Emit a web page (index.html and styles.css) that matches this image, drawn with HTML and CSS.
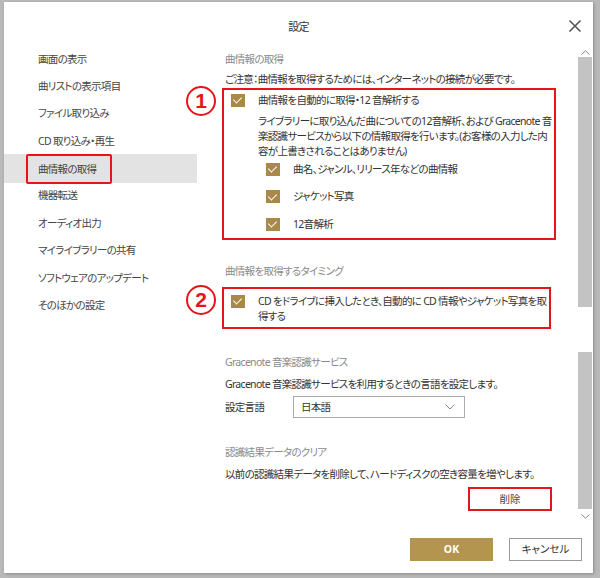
FILE: index.html
```html
<!DOCTYPE html>
<html lang="ja">
<head>
<meta charset="utf-8">
<title>設定</title>
<link rel="stylesheet" href="styles.css">
</head>
<body>
<div class="window">
  <header class="titlebar">
    <span></span>
    <h1 class="title">設定</h1>
    <button class="close" aria-label="閉じる">
      <svg width="14" height="14" viewBox="0 0 14 14"><path d="M1.5 1.5 L12.5 12.5 M12.5 1.5 L1.5 12.5" stroke="#555" stroke-width="1.6" fill="none"/></svg>
    </button>
  </header>
  <div class="main">
    <nav class="sidebar">
      <div class="nav-item">画面の表示</div>
      <div class="nav-item">曲リストの表示項目</div>
      <div class="nav-item">ファイル取り込み</div>
      <div class="nav-item">CD 取り込み・再生</div>
      <div class="nav-item active"><span class="mark">曲情報の取得</span></div>
      <div class="nav-item">機器転送</div>
      <div class="nav-item">オーディオ出力</div>
      <div class="nav-item">マイライブラリーの共有</div>
      <div class="nav-item">ソフトウェアのアップデート</div>
      <div class="nav-item">そのほかの設定</div>
    </nav>
    <section class="content">
      <h2 class="sec sec-1">曲情報の取得</h2>
      <p class="note">ご注意：曲情報を取得するためには、インターネットの接続が必要です。</p>
      <div class="redbox box-1">
        <span class="badge">1</span>
        <div class="check-row">
          <span class="cb"></span>
          <span>曲情報を自動的に取得・12 音解析する</span>
        </div>
        <p class="desc">ライブラリーに取り込んだ曲についての12音解析、および Gracenote 音<br>楽認識サービスから以下の情報取得を行います。(お客様の入力した内<br>容が上書きされることはありません)</p>
        <div class="sub-list">
          <div class="check-row"><span class="cb"></span><span>曲名、ジャンル、リリース年などの曲情報</span></div>
          <div class="check-row"><span class="cb"></span><span>ジャケット写真</span></div>
          <div class="check-row"><span class="cb"></span><span>12音解析</span></div>
        </div>
      </div>
      <h2 class="sec sec-2">曲情報を取得するタイミング</h2>
      <div class="redbox box-2">
        <span class="badge">2</span>
        <div class="check-row top">
          <span class="cb"></span>
          <span class="wrap">CD をドライブに挿入したとき、自動的に CD 情報やジャケット写真を取<br>得する</span>
        </div>
      </div>
      <h2 class="sec sec-3">Gracenote 音楽認識サービス</h2>
      <p class="line gap7">Gracenote 音楽認識サービスを利用するときの言語を設定します。</p>
      <div class="lang-row">
        <span class="lang-label">設定言語</span>
        <div class="select">
          <span>日本語</span>
          <svg width="10" height="6" viewBox="0 0 10 6"><path d="M0.5 0.5 L5 5 L9.5 0.5" stroke="#888" stroke-width="1" fill="none"/></svg>
        </div>
      </div>
      <h2 class="sec sec-4">認識結果データのクリア</h2>
      <p class="line gap7">以前の認識結果データを削除して、ハードディスクの空き容量を増やします。</p>
      <div class="del-row">
        <button class="del">削除</button>
      </div>
    </section>
    <div class="scrollbar">
      <svg class="arrow" width="9" height="5" viewBox="0 0 9 5"><path d="M0.5 4.5 L4.5 0.8 L8.5 4.5" stroke="#888" stroke-width="1" fill="none"/></svg>
      <div class="thumb t1"></div>
      <div class="gap"></div>
      <div class="thumb t2"></div>
      <svg class="arrow" width="9" height="5" viewBox="0 0 9 5"><path d="M0.5 0.5 L4.5 4.2 L8.5 0.5" stroke="#888" stroke-width="1" fill="none"/></svg>
    </div>
  </div>
  <footer class="footer">
    <button class="btn ok">OK</button>
    <button class="btn cancel">キャンセル</button>
  </footer>
</div>
</body>
</html>
```
FILE: styles.css
```css
* { box-sizing: border-box; }
html, body { margin: 0; padding: 0; }
body {
  width: 600px;
  height: 578px;
  background: #b9b9b9;
  font-family: "Noto Sans", "Noto Sans CJK JP", sans-serif;
  font-size: 10.5px;
  letter-spacing: -0.7px;
  line-height: 15px;
  color: #333;
  font-feature-settings: "palt";
  overflow: hidden;
}
.window {
  position: relative;
  margin: 2px 0 0 4px;
  width: 589px;
  height: 571px;
  background: #fff;
  display: flex;
  flex-direction: column;
  box-shadow: 1px 1px 3px rgba(0,0,0,0.25);
}
.titlebar {
  height: 43px;
  display: grid;
  grid-template-columns: 1fr auto 1fr;
  align-items: start;
  padding-top: 17px;
}
.title {
  margin: 0;
  font-size: 11px;
  font-weight: normal;
  line-height: 15px;
  color: #333;
}
.close {
  justify-self: end;
  margin: 0 11px 0 0;
  padding: 0;
  border: 0;
  background: none;
  width: 14px;
  height: 14px;
  display: flex;
}
.main {
  display: flex;
  height: 483px;
}
.sidebar {
  width: 193px;
  flex: none;
  padding-top: 0.5px;
}
.nav-item {
  height: 27.4px;
  line-height: 27.4px;
  padding-left: 34px;
  color: #444;
}
.nav-item.active {
  background: #e3e3e3;
  height: 29px;
  line-height: 29px;
  margin: -0.8px 0;
}
.mark {
  position: relative;
  display: inline-block;
  line-height: 15px;
  vertical-align: middle;
}
.mark::after {
  content: "";
  position: absolute;
  left: -12px;
  right: -16px;
  top: -7.5px;
  bottom: -7.5px;
  border: 2.5px solid #e4161b;
  border-radius: 2px;
}
.content {
  flex: 1;
  padding-left: 28px;
  padding-top: 6.5px;
}
.sec {
  margin: 0;
  font-size: 10.5px;
  font-weight: normal;
  line-height: 15px;
  color: #8a8a8a;
}
.note { margin: 5px 0 0; }
.redbox {
  position: relative;
  border: 2px solid #e4161b;
  margin-left: -3px;
}
.box-1 {
  width: 334px;
  margin-top: 1.5px;
  padding: 2.5px 0 6.5px 7px;
}
.box-2 {
  width: 329px;
  margin-top: 8.5px;
  padding: 4.5px 0 3.5px 7px;
}
.badge {
  position: absolute;
  left: -38px;
  top: -4px;
  width: 30px;
  height: 30px;
  border: 2px solid #e4161b;
  border-radius: 50%;
  color: #e4161b;
  font-family: "Liberation Sans", sans-serif;
  font-weight: bold;
  font-size: 21px;
  letter-spacing: 0;
  line-height: 26px;
  text-align: center;
  background: #fff;
}
.check-row {
  display: flex;
  align-items: center;
  gap: 13px;
}
.check-row.top { align-items: flex-start; }
.check-row.top .cb { margin-top: 1px; }
.cb {
  flex: none;
  width: 14px;
  height: 13px;
  background: #a8894a;
  position: relative;
}
.cb::after {
  content: "";
  position: absolute;
  left: 4px;
  top: 1.5px;
  width: 4px;
  height: 7px;
  border: solid #fff;
  border-width: 0 1.6px 1.6px 0;
  transform: rotate(45deg);
}
.wrap { white-space: nowrap; }
.desc {
  margin: 6px 0 0 27px;
  white-space: nowrap;
}
.sub-list {
  margin: 3px 0 0 35px;
  display: flex;
  flex-direction: column;
  gap: 12.5px;
}
.sec-2 { margin-top: 23.5px; }
.sec-3 { margin-top: 25.5px; }
.sec-4 { margin-top: 26.5px; }
.line { margin: 0; }
.gap7 { margin-top: 7px; }
.lang-row {
  margin-top: 4.5px;
  display: flex;
  align-items: center;
}
.lang-label {
  width: 68px;
  padding-top: 1px;
}
.select {
  width: 172px;
  height: 22px;
  border: 1px solid #ababab;
  display: flex;
  align-items: center;
  justify-content: space-between;
  padding: 0 9px 0 7px;
}
.del-row {
  display: flex;
  justify-content: flex-end;
  width: 327px;
  margin-top: 5.5px;
}
.del {
  width: 84px;
  height: 24px;
  border: 2px solid #e4161b;
  background: #fff;
  font: inherit;
  color: #444;
  padding: 0;
}
.scrollbar {
  width: 14px;
  flex: none;
  margin-right: 1px;
  display: flex;
  flex-direction: column;
  align-items: center;
  padding-top: 5px;
}
.arrow { flex: none; margin: 0 0 2px; }
.thumb {
  width: 14px;
  background: #c3c3c3;
}
.t1 { height: 250px; }
.gap { height: 45px; }
.t2 { height: 157px; margin-bottom: 5px; }
.footer {
  display: flex;
  justify-content: flex-end;
  gap: 16px;
  padding: 10px 11px 0 0;
}
.btn {
  height: 23px;
  font: inherit;
  padding: 0;
}
.ok {
  width: 83px;
  border: 0;
  background: #b4954f;
  color: #fff;
  font-weight: bold;
  letter-spacing: 0;
}
.cancel {
  width: 73px;
  border: 1px solid #9a9a9a;
  background: #fff;
  color: #333;
}
```
